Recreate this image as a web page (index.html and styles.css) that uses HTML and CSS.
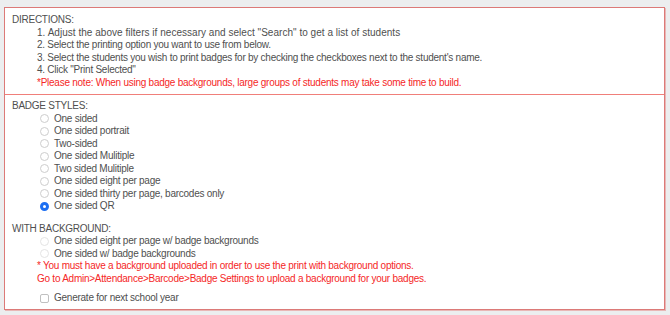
FILE: index.html
```html
<!DOCTYPE html>
<html>
<head>
<meta charset="utf-8">
<link rel="stylesheet" href="styles.css">
</head>
<body>
<div class="panel">
  <div class="section directions">
    <div class="title">DIRECTIONS:</div>
    <ol class="steps">
      <li class="wide">1. Adjust the above filters if necessary and select "Search" to get a list of students</li>
      <li>2. Select the printing option you want to use from below.</li>
      <li>3. Select the students you wish to print badges for by checking the checkboxes next to the student's name.</li>
      <li>4. Click "Print Selected"</li>
      <li class="warn">*Please note: When using badge backgrounds, large groups of students may take some time to build.</li>
    </ol>
  </div>
  <div class="section styles">
    <div class="title">BADGE STYLES:</div>
    <ul class="options">
      <li><span class="radio"></span>One sided</li>
      <li><span class="radio"></span>One sided portrait</li>
      <li><span class="radio"></span>Two-sided</li>
      <li><span class="radio"></span>One sided Mulitiple</li>
      <li><span class="radio"></span>Two sided Mulitiple</li>
      <li><span class="radio"></span>One sided eight per page</li>
      <li><span class="radio"></span>One sided thirty per page, barcodes only</li>
      <li><span class="radio checked"></span>One sided QR</li>
    </ul>
    <div class="title gap">WITH BACKGROUND:</div>
    <ul class="options">
      <li><span class="radio disabled"></span>One sided eight per page w/ badge backgrounds</li>
      <li><span class="radio disabled"></span>One sided w/ badge backgrounds</li>
    </ul>
    <div class="notes">
      <div class="warn">* You must have a background uploaded in order to use the print with background options.</div>
      <div class="warn">Go to Admin&gt;Attendance&gt;Barcode&gt;Badge Settings to upload a background for your badges.</div>
    </div>
    <div class="next-year"><span class="check"></span>Generate for next school year</div>
  </div>
</div>
</body>
</html>
```
FILE: styles.css
```css
html, body {
  margin: 0;
  background: #eceeef;
}
body {
  padding: 7px 5px 4px 4px;
  font-family: "Liberation Sans", Arial, Helvetica, sans-serif;
  font-size: 10px;
  letter-spacing: -0.25px;
  line-height: 12.5px;
  color: #4f4f4f;
}
.panel {
  background: #fff;
  border: 1px solid #dc7a78;
  box-shadow: 1px 1px 0 #e9b7b6;
  height: 303px;
  box-sizing: border-box;
}
.section {
  padding: 6px 7px 5px 7px;
}
.directions {
  border-bottom: 1px solid #f07f7a;
}
.steps, .options {
  list-style: none;
  margin: 0;
  padding: 0 0 0 25px;
}
.steps .wide {
  letter-spacing: 0.03px;
}
.warn {
  color: #f52727;
}
.styles {
  padding-top: 5px;
}
.options {
  padding-left: 28px;
}
.options li {
  display: flex;
  align-items: center;
}
.radio {
  width: 7px;
  height: 7px;
  border: 1px solid #cdcdcd;
  border-radius: 50%;
  margin-right: 5px;
  box-sizing: content-box;
  flex: none;
}
.radio.disabled {
  border-color: #e4e4e4;
}
.radio.checked {
  width: 3px;
  height: 3px;
  border: 3px solid #1d6ff2;
  background: #fff;
}
.title.gap {
  margin-top: 10px;
}
.notes {
  padding-left: 25px;
}
.next-year {
  display: flex;
  align-items: center;
  padding-left: 28px;
  margin-top: 7px;
}
.check {
  width: 7px;
  height: 7px;
  border: 1px solid #c0c0c0;
  border-radius: 2px;
  margin-right: 5px;
  flex: none;
}
```
